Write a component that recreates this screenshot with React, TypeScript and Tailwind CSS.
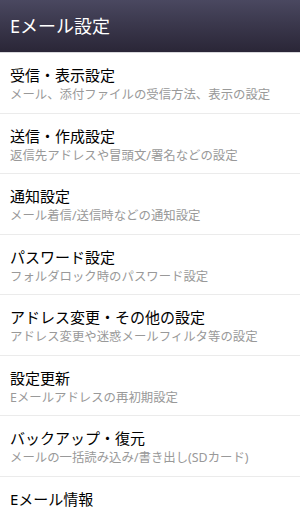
const items = [
  { title: '受信・表示設定', sub: 'メール、添付ファイルの受信方法、表示の設定' },
  { title: '送信・作成設定', sub: '返信先アドレスや冒頭文/署名などの設定' },
  { title: '通知設定', sub: 'メール着信/送信時などの通知設定' },
  { title: 'パスワード設定', sub: 'フォルダロック時のパスワード設定' },
  { title: 'アドレス変更・その他の設定', sub: 'アドレス変更や迷惑メールフィルタ等の設定' },
  { title: '設定更新', sub: 'Eメールアドレスの再初期設定' },
  { title: 'バックアップ・復元', sub: 'メールの一括読み込み/書き出し(SDカード)' },
  { title: 'Eメール情報', sub: '' },
];

export default function App() {
  return (
    <div
      className="w-[300px] h-[508px] overflow-hidden bg-white"
      style={{ fontFamily: '"Noto Sans", "Noto Sans CJK JP", sans-serif' }}
    >
      <div className="h-[53px] bg-gradient-to-b from-[#4a4860] to-[#2a2637] flex items-center px-[10px] border-b border-[#d8d8dc]">
        <h1 className="text-[18px] text-white leading-none">Eメール設定</h1>
      </div>
      <ul>
        {items.map((it) => (
          <li
            key={it.title}
            className="h-[60.5px] border-b border-[#ebebeb] px-[10px] pt-[12px]"
          >
            <div className="text-[15px] leading-[20px] text-black">{it.title}</div>
            {it.sub && (
              <div className="text-[12.4px] leading-[20px] text-[#999] whitespace-nowrap">{it.sub}</div>
            )}
          </li>
        ))}
      </ul>
    </div>
  );
}
